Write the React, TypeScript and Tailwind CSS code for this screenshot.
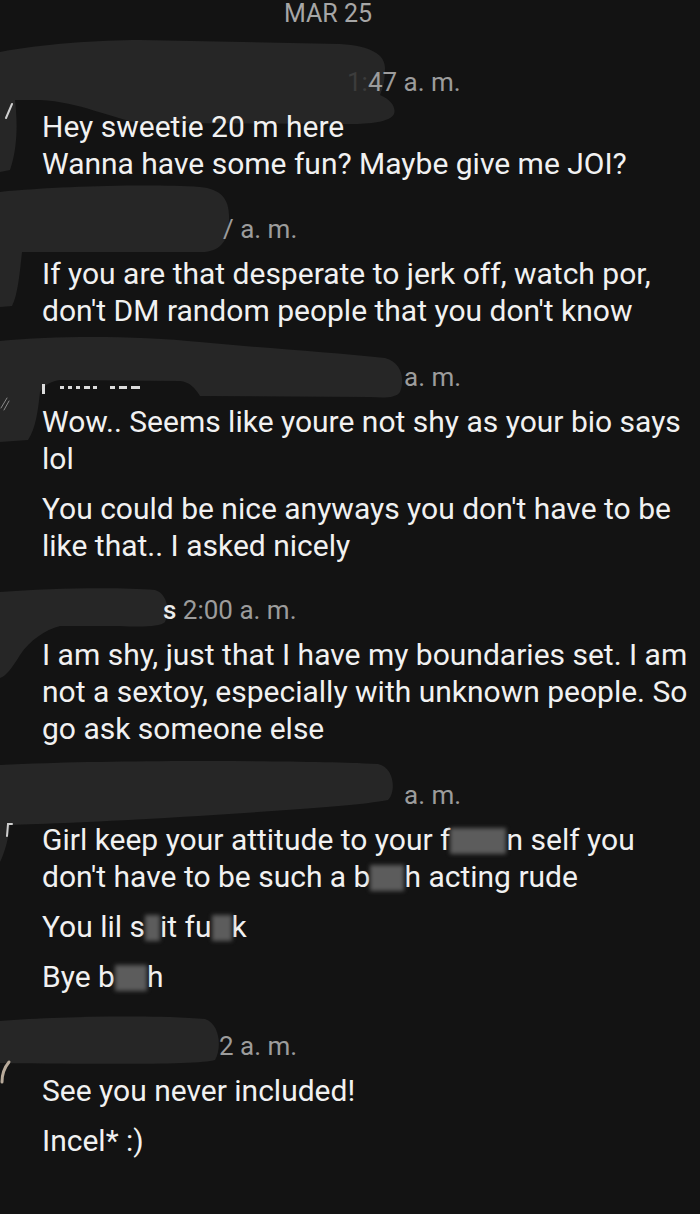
import React from "react";

type Group = {
  gap: string;
  stamp: React.ReactNode;
  stampPad: string;
  paragraphs: React.ReactNode[][];
};

// blurred censor patch sitting inside a word
function Censor({ w }: { w: string }) {
  return <span className={`inline-block ${w} h-[26px] align-[-4px] bg-[#5c5c5c] blur-[2px]`} />;
}

const groups: Group[] = [
  {
    gap: "mt-[39px]",
    stampPad: "pl-[305px]",
    stamp: (
      <>
        <span className="text-[#3c3c3c]">1:</span>47 a. m.
      </>
    ),
    paragraphs: [["Hey sweetie 20 m here", "Wanna have some fun? Maybe give me JOI?"]],
  },
  {
    gap: "mt-[32px]",
    stampPad: "pl-[181px]",
    stamp: <>/ a. m.</>,
    paragraphs: [
      [
        "If you are that desperate to jerk off, watch por,",
        "don't DM random people that you don't know",
      ],
    ],
  },
  {
    gap: "mt-[33px]",
    stampPad: "pl-[362px]",
    stamp: <>a. m.</>,
    paragraphs: [
      ["Wow.. Seems like youre not shy as your bio says", "lol"],
      ["You could be nice anyways you don't have to be", "like that.. I asked nicely"],
    ],
  },
  {
    gap: "mt-[31px]",
    stampPad: "pl-[121px]",
    stamp: (
      <>
        <span className="font-medium text-[#ececec]">s</span> 2:00 a. m.
      </>
    ),
    paragraphs: [
      [
        "I am shy, just that I have my boundaries set. I am",
        "not a sextoy, especially with unknown people. So",
        "go ask someone else",
      ],
    ],
  },
  {
    gap: "mt-[33px]",
    stampPad: "pl-[362px]",
    stamp: <>a. m.</>,
    paragraphs: [
      [
        <>
          Girl keep your attitude to your f<Censor w="w-[56px]" />n self you
        </>,
        <>
          don't have to be such a b<Censor w="w-[34px]" />h acting rude
        </>,
      ],
      [
        <>
          You lil s<Censor w="w-[15px]" />it fu<Censor w="w-[20px]" />k
        </>,
      ],
      [
        <>
          Bye b<Censor w="w-[32px]" />h
        </>,
      ],
    ],
  },
  {
    gap: "mt-[36px]",
    stampPad: "pl-[177px]",
    stamp: <>2 a. m.</>,
    paragraphs: [["See you never included!"], ["Incel* :)"]],
  },
];

// the grey brush strokes that hide names and avatars
function Redactions() {
  return (
    <svg className="absolute inset-0 z-0" width="700" height="1214" viewBox="0 0 700 1214">
      <g fill="#262626">
        <path d="M0,52 C40,44 100,40 140,40 L340,44 C372,46 385,55 385,68 C385,80 383,88 380,95 C392,100 396,108 394,114 C390,122 370,124 350,124 L140,123 C110,118 80,102 40,100 L15,100 C18,125 17,150 10,170 L0,172 Z" />
        <path d="M0,192 C60,186 150,184 200,187 C222,189 230,200 229,220 C228,240 222,250 205,252 L22,252 C20,270 18,295 12,306 L0,307 Z" />
        <path d="M0,341 C60,335 140,336 200,342 C260,348 330,352 385,358 C402,362 405,380 400,392 C396,398 385,398 370,397 L200,396 C195,388 190,382 180,381 L60,380 C52,381 45,384 40,392 C38,410 36,428 28,440 L0,442 Z" />
        <path d="M0,592 C50,588 120,587 155,590 C168,594 170,612 165,622 C160,627 140,627 120,626 L60,626 C45,630 30,640 20,655 C12,668 6,676 0,678 Z" />
        <path d="M0,765 C100,760 300,760 378,764 C395,768 396,792 388,800 C360,806 260,812 180,817 C100,822 40,824 10,825 C8,840 5,852 0,862 Z" />
        <path d="M0,1021 C60,1016 160,1015 205,1019 C220,1024 222,1048 215,1060 C200,1065 100,1064 0,1063 Z" />
      </g>
      {/* bottoms of name letters peeking out under the third stroke */}
      <g fill="#dcdcdc">
        <rect x="42" y="384" width="3" height="10" />
        <rect x="60" y="386" width="4" height="3" />
        <rect x="68" y="386" width="4" height="3" />
        <rect x="76" y="386" width="4" height="3" />
        <rect x="84" y="386" width="6" height="3" />
        <rect x="93" y="386" width="4" height="3" />
        <rect x="110" y="386" width="5" height="3" />
        <rect x="119" y="386" width="8" height="3" />
        <rect x="131" y="386" width="9" height="3" />
      </g>
      {/* avatar edges on the left */}
      <g stroke="#cfcfcf" strokeWidth="2" fill="none" strokeLinecap="round">
        <path d="M6,118 L12,104" />
        <path d="M1,408 L7,398 M4,410 L9,401" stroke="#8a8a8a" strokeWidth="1" />
        <path d="M7,836 L8,824 L12,824" />
        <path d="M9,1062 C4,1068 2,1076 2,1082" stroke="#b8aa9a" strokeWidth="3" />
      </g>
    </svg>
  );
}

export default function App() {
  return (
    <div className="relative w-[700px] h-[1214px] overflow-hidden bg-[#131313] font-['Roboto',sans-serif]">
      <Redactions />
      <div className="relative z-10 pl-[42px]">
        <div className="pl-[242px] text-[25px] leading-[28px] text-[#a6a6a6]">MAR 25</div>
        {groups.map((g, i) => (
          <div key={i} className={g.gap}>
            <div className={`${g.stampPad} text-[26px] leading-[30px] text-[#9c9c9c]`}>{g.stamp}</div>
            <div className="mt-[11px] flex flex-col gap-[13px] text-[30px] leading-[37px] text-[#f1f1f1]">
              {g.paragraphs.map((p, j) => (
                <div key={j}>
                  {p.map((line, k) => (
                    <div key={k} className="whitespace-nowrap">
                      {line}
                    </div>
                  ))}
                </div>
              ))}
            </div>
          </div>
        ))}
      </div>
    </div>
  );
}
